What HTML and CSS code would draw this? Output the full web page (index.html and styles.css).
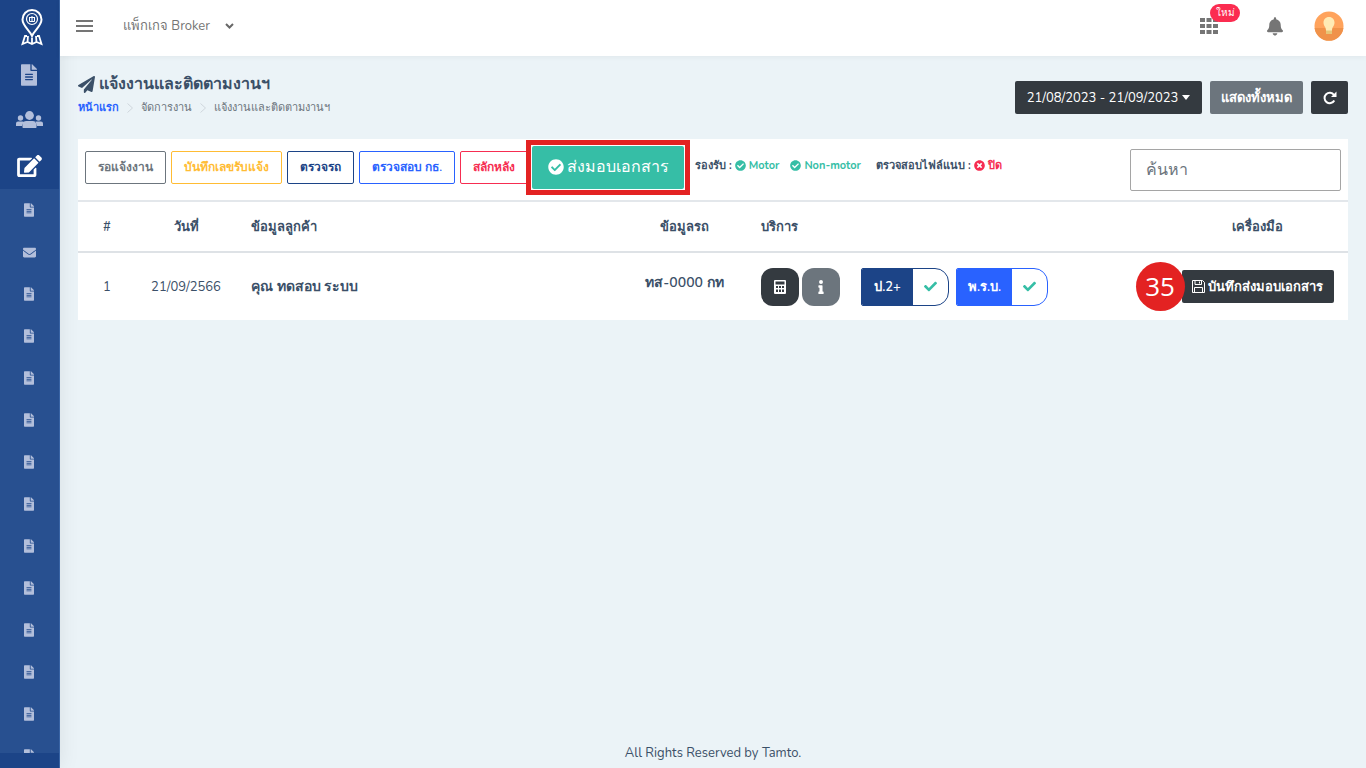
FILE: index.html
```html
<!DOCTYPE html>
<html lang="th">
<head>
<meta charset="utf-8">
<meta name="viewport" content="width=device-width, initial-scale=1">
<title>แจ้งงานและติดตามงานฯ</title>
<link rel="stylesheet" href="styles.css">
</head>
<body>
<svg class="defs" aria-hidden="true">
  <symbol id="file" viewBox="0 0 384 512"><path d="M224 136V0H24C10.700 0 0 10.700 0 24v464c0 13.300 10.700 24 24 24h336c13.300 0 24-10.700 24-24V160H248c-13.200 0-24-10.800-24-24zm64 236c0 6.600-5.400 12-12 12H108c-6.600 0-12-5.400-12-12v-8c0-6.600 5.400-12 12-12h168c6.600 0 12 5.400 12 12v8zm0-64c0 6.600-5.400 12-12 12H108c-6.600 0-12-5.400-12-12v-8c0-6.600 5.400-12 12-12h168c6.600 0 12 5.400 12 12v8zm0-72v8c0 6.600-5.400 12-12 12H108c-6.600 0-12-5.400-12-12v-8c0-6.600 5.400-12 12-12h168c6.600 0 12 5.400 12 12zm96-114.100v6.100H256V0h6.100c6.400 0 12.500 2.500 17 7l97.900 98c4.500 4.500 7 10.600 7 16.900z"/></symbol>
  <symbol id="check-circle" viewBox="0 0 512 512"><path d="M504 256c0 136.967-111.033 248-248 248S8 392.967 8 256 119.033 8 256 8s248 111.033 248 248zM227.314 387.314l184-184c6.248-6.248 6.248-16.379 0-22.627l-22.627-22.627c-6.248-6.249-16.379-6.249-22.628 0L216 308.118l-70.059-70.059c-6.248-6.248-16.379-6.248-22.628 0l-22.627 22.627c-6.248 6.248-6.248 16.379 0 22.627l104 104c6.249 6.249 16.379 6.249 22.628.001z"/></symbol>
  <symbol id="check" viewBox="0 0 512 512"><path d="M173.898 439.404l-166.4-166.4c-9.997-9.997-9.997-26.206 0-36.204l36.203-36.204c9.997-9.998 26.207-9.998 36.204 0L192 312.69 432.095 72.596c9.997-9.997 26.207-9.997 36.204 0l36.203 36.204c9.997 9.997 9.997 26.206 0 36.204l-294.4 294.401c-9.998 9.997-26.207 9.997-36.204-.001z"/></symbol>
</svg>
<div class="app">
  <nav class="sidebar" aria-label="เมนูหลัก">
    <a class="logo" href="#" aria-label="Tamto"><svg width="22" height="37" viewBox="0 0 22 37" fill="none" stroke="#fff"><path d="M11 27C9 21.500 1.500 17 1.500 10.500a9.500 9.500 0 0 1 19 0C20.500 17 13 21.500 11 27z" stroke-width="2"/><circle cx="11" cy="10" r="5.500" stroke-width="1.200"/><path d="M8 8.500h6M8.500 8.500v4h5v-4M11 7v6" stroke-width="1"/><path d="M6 27H4L1.500 35l5-2 4.500 2 4.500-2 5 2L18 27h-2M7 27l-.5 6M15 27l.5 6M11 29v5" stroke-width="1.800"/></svg></a>
    <a class="main-link" href="#" aria-label="เอกสาร"><svg width="16" height="22"><use href="#file"/></svg></a>
    <a class="main-link" href="#" aria-label="ลูกค้า"><svg width="27" height="17" viewBox="0 0 27 17"><circle cx="4.500" cy="7" r="2.700"/><circle cx="22.500" cy="7" r="2.700"/><circle cx="13.500" cy="4.500" r="4.400"/><path d="M0 15v-2.500Q0 10.500 2 10.500h4.500q1 0 1.500.5-2 1.500-2 4zM27 15v-2.500q0-2-2-2h-4.500q-1 0-1.500.5 2 1.500 2 4zM7 17q-.5 0-.5-1v-2q0-4 4-4h6q4 0 4 4v2q0 1-.5 1z"/></svg></a>
    <a class="main-link active" href="#" aria-label="จัดการงาน"><svg width="25" height="22" viewBox="0 0 576 512"><path d="M402.600 83.200l90.200 90.200c3.800 3.800 3.800 10 0 13.800L274.400 405.600l-92.800 10.300c-12.400 1.400-22.900-9.100-21.500-21.500l10.300-92.800L388.800 83.200c3.800-3.800 10-3.800 13.800 0zm162-22.900l-48.800-48.800c-15.200-15.200-39.900-15.200-55.200 0l-35.400 35.400c-3.800 3.800-3.800 10 0 13.800l90.200 90.200c3.800 3.800 10 3.800 13.800 0l35.400-35.400c15.200-15.300 15.200-40 0-55.200zM384 346.200V448H64V128h229.800c3.200 0 6.200-1.300 8.500-3.500l40-40c7.600-7.600 2.200-20.500-8.500-20.500H48C21.500 64 0 85.500 0 112v352c0 26.500 21.500 48 48 48h352c26.500 0 48-21.500 48-48V306.200c0-10.700-12.900-16-20.500-8.500l-40 40c-2.200 2.300-3.500 5.300-3.500 8.500z"/></svg></a>
    <div class="submenu">
      <a href="#" aria-label="รายการ 1"><svg width="10" height="14"><use href="#file"/></svg></a>
      <a href="#" aria-label="ข้อความ"><svg width="13" height="13" viewBox="0 0 512 512"><path d="M502.300 190.800c3.900-3.100 9.700-.2 9.700 4.700V400c0 26.500-21.500 48-48 48H48c-26.500 0-48-21.500-48-48V195.600c0-5 5.700-7.800 9.700-4.700 22.400 17.400 52.100 39.500 154.100 113.600 21.100 15.400 56.700 47.800 92.200 47.600 35.700.3 72-32.800 92.300-47.600 102-74.100 131.600-96.300 154-113.700zM256 320c23.200.4 56.600-29.200 73.400-41.400 132.700-96.300 142.800-104.700 173.400-128.700 5.800-4.500 9.200-11.500 9.200-18.900v-19c0-26.500-21.500-48-48-48H48c-26.500 0-48 21.500-48 48v19c0 7.400 3.400 14.300 9.200 18.900 30.600 23.900 40.700 32.400 173.400 128.700 16.800 12.200 50.200 41.800 73.400 41.400z"/></svg></a>
      <a href="#" aria-label="รายการ 2"><svg width="10" height="14"><use href="#file"/></svg></a>
      <a href="#" aria-label="รายการ 3"><svg width="10" height="14"><use href="#file"/></svg></a>
      <a href="#" aria-label="รายการ 4"><svg width="10" height="14"><use href="#file"/></svg></a>
      <a href="#" aria-label="รายการ 5"><svg width="10" height="14"><use href="#file"/></svg></a>
      <a href="#" aria-label="รายการ 6"><svg width="10" height="14"><use href="#file"/></svg></a>
      <a href="#" aria-label="รายการ 7"><svg width="10" height="14"><use href="#file"/></svg></a>
      <a href="#" aria-label="รายการ 8"><svg width="10" height="14"><use href="#file"/></svg></a>
      <a href="#" aria-label="รายการ 9"><svg width="10" height="14"><use href="#file"/></svg></a>
      <a href="#" aria-label="รายการ 10"><svg width="10" height="14"><use href="#file"/></svg></a>
      <a href="#" aria-label="รายการ 11"><svg width="10" height="14"><use href="#file"/></svg></a>
      <a href="#" aria-label="รายการ 12"><svg width="10" height="14"><use href="#file"/></svg></a>
      <a href="#" aria-label="รายการ 13"><svg width="10" height="14"><use href="#file"/></svg></a>
    </div>
  </nav>
  <div class="page">
    <header class="topbar">
      <button class="plain" aria-label="เมนู"><svg width="17" height="12" viewBox="0 0 17 12" fill="none" stroke="#757575" stroke-width="2"><path d="M0 1h17M0 6h17M0 11h17"/></svg></button>
      <button class="plain package">แพ็กเกจ Broker <svg width="9" height="6" viewBox="0 0 9 6" fill="none" stroke="#686868" stroke-width="2"><path d="M1 1l3.500 3.500L8 1"/></svg></button>
      <div class="top-actions">
        <button class="plain apps" aria-label="แอป"><svg width="18" height="16" viewBox="0 0 18 16" fill="#757575"><path d="M0 0h5v4H0zM6.500 0h5v4h-5zM13 0h5v4h-5zM0 6h5v4H0zM6.500 6h5v4h-5zM13 6h5v4h-5zM0 12h5v4H0zM6.500 12h5v4h-5zM13 12h5v4h-5z"/></svg><span class="badge">ใหม่</span></button>
        <button class="plain" aria-label="แจ้งเตือน"><svg width="16" height="19" viewBox="0 0 448 512" fill="#757575"><path d="M224 512c35.320 0 63.970-28.650 63.970-64H160.030c0 35.350 28.650 64 63.970 64zm215.390-149.710c-19.320-20.760-55.470-51.990-55.470-154.290 0-77.700-54.480-139.900-127.940-155.160V32c0-17.670-14.320-32-31.980-32s-31.980 14.330-31.980 32v20.840C118.560 68.100 64.080 130.300 64.080 208c0 102.300-36.150 133.530-55.470 154.290-6 6.450-8.660 14.160-8.610 21.710.11 16.400 12.980 32 32.100 32h383.800c19.120 0 32-15.600 32.100-32 .05-7.550-2.610-15.270-8.610-21.710z"/></svg></button>
        <button class="plain" aria-label="บัญชีผู้ใช้"><svg width="30" height="30" viewBox="0 0 30 30"><circle cx="15" cy="15" r="14.500" fill="#ffa35c"/><path d="M.6 17h28.800a14.500 14.500 0 0 1-28.800 0z" fill="#f0924a"/><path d="M12 18h6v5h-6z" fill="#e6c678"/><path d="M15 6c-3.500 0-5.500 2.500-5.500 5.500 0 3.500 2.500 4.500 2.500 8h6c0-3.500 2.500-4.500 2.500-8C20.500 8.500 18.500 6 15 6z" fill="#ffebb5"/></svg></button>
      </div>
    </header>
    <main>
      <div class="heading">
        <div>
          <h1><svg width="17" height="17" viewBox="0 0 512 512"><path d="M476 3.200L12.500 270.600c-18.100 10.400-15.800 35.600 2.200 43.200L121 358.400l287.300-253.200c5.500-4.900 13.300 2.600 8.600 8.300L176 407v80.500c0 23.600 28.500 32.900 42.500 15.800L282 426l124.600 52.200c14.200 6 30.400-2.900 33-18.200l72-432C515 7.800 493.300-6.800 476 3.200z"/></svg>แจ้งงานและติดตามงานฯ</h1>
          <nav class="crumbs" aria-label="เส้นทาง"><a href="#">หน้าแรก</a><svg width="6" height="10" viewBox="0 0 6 10"><path d="M.5.5L5.500 5 .5 9.500"/></svg><span>จัดการงาน</span><svg width="6" height="10" viewBox="0 0 6 10"><path d="M.5.5L5.500 5 .5 9.500"/></svg><span>แจ้งงานและติดตามงานฯ</span></nav>
        </div>
        <div class="filters">
          <button class="btn dark date">21/08/2023 - 21/09/2023 <svg width="8" height="5" viewBox="0 0 8 5"><path d="M0 0h8L4 5z"/></svg></button>
          <button class="btn grey all">แสดงทั้งหมด</button>
          <button class="btn dark refresh" aria-label="รีเฟรช"><svg width="14" height="14" viewBox="0 0 14 14"><path d="M11.300 9.500A5.200 5.200 0 1 1 11 4" fill="none" stroke="#fff" stroke-width="2"/><path d="M13.500.5V6H8z"/></svg></button>
        </div>
      </div>
      <section class="card">
        <div class="toolbar">
          <div class="tabs">
            <button class="tab t-grey">รอแจ้งงาน</button>
            <button class="tab t-yellow">บันทึกเลขรับแจ้ง</button>
            <button class="tab t-navy">ตรวจรถ</button>
            <button class="tab t-blue">ตรวจสอบ กธ.</button>
            <button class="tab t-red">สลักหลัง</button>
            <div class="highlight"><button class="current"><svg width="16" height="16"><use href="#check-circle"/></svg>ส่งมอบเอกสาร</button></div>
          </div>
          <div class="support">
            <span>รองรับ :</span><span class="yes motor"><svg width="11" height="11"><use href="#check-circle"/></svg>Motor</span><span class="yes nonmotor"><svg width="11" height="11"><use href="#check-circle"/></svg>Non-motor</span><span>ตรวจสอบไฟล์แนบ :</span><span class="no"><svg width="11" height="11" viewBox="0 0 512 512"><path d="M256 8C119 8 8 119 8 256s111 248 248 248 248-111 248-248S393 8 256 8zm121.600 313.100c4.700 4.700 4.700 12.300 0 17L338 377.600c-4.700 4.700-12.300 4.700-17 0L256 312l-65.100 65.600c-4.700 4.700-12.300 4.700-17 0L134.400 338c-4.700-4.700-4.700-12.300 0-17l65.600-65-65.600-65.100c-4.700-4.700-4.700-12.300 0-17l39.600-39.600c4.700-4.700 12.300-4.700 17 0l65 65.700 65.100-65.600c4.700-4.700 12.300-4.700 17 0l39.600 39.600c4.700 4.700 4.700 12.300 0 17L312 256l65.600 65.100z"/></svg>ปิด</span>
          </div>
          <input class="search" type="search" placeholder="ค้นหา" aria-label="ค้นหา">
        </div>
        <table>
          <colgroup><col class="c-no"><col class="c-date"><col><col class="c-car"><col class="c-service"><col class="c-tools"></colgroup>
          <thead><tr><th>#</th><th>วันที่</th><th class="left">ข้อมูลลูกค้า</th><th>ข้อมูลรถ</th><th class="left">บริการ</th><th>เครื่องมือ</th></tr></thead>
          <tbody><tr>
            <td>1</td><td>21/09/2566</td><td class="left name">คุณ ทดสอบ ระบบ</td><td class="plate">ทส-0000 กท</td>
            <td class="left"><div class="services">
              <button class="square dark" aria-label="คำนวณ"><svg width="12" height="14" viewBox="0 0 12 14"><path fill-rule="evenodd" d="M1 0h10q1 0 1 1v12q0 1-1 1H1q-1 0-1-1V1q0-1 1-1zm.5 1.500v3h9v-3zM2 6v2h2V6zm3 0v2h2V6zm3 0v2h2V6zM2 9.500v2.500h2V9.500zm3 0v2.500h2V9.500zm3 0v2.500h2V9.500z"/></svg></button>
              <button class="square grey" aria-label="ข้อมูล"><svg width="6" height="14" viewBox="0 0 192 512"><path d="M20 424h20V280H20c-11 0-20-9-20-20v-48c0-11 9-20 20-20h112c11 0 20 9 20 20v212h20c11 0 20 9 20 20v48c0 11-9 20-20 20H20c-11 0-20-9-20-20v-48c0-11 9-20 20-20zM96 0a72 72 0 1 0 0 144A72 72 0 0 0 96 0z"/></svg></button>
              <button class="policy p-navy"><span>ป.2+</span><i><svg width="13" height="13"><use href="#check"/></svg></i></button>
              <button class="policy p-blue"><span>พ.ร.บ.</span><i><svg width="13" height="13"><use href="#check"/></svg></i></button>
            </div></td>
            <td><div class="save-wrap"><button class="btn dark save"><svg width="13" height="13" viewBox="0 0 13 13" fill="none" stroke="#fff"><path d="M.5.5h10l2 2v10H.5zM3 .5v4h6.500v-4M7.500 1.500v2M2.500 12.500v-5h8v5"/></svg>บันทึกส่งมอบเอกสาร</button><span class="step">35</span></div></td>
          </tr></tbody>
        </table>
      </section>
    </main>
    <footer>All Rights Reserved by Tamto.</footer>
  </div>
</div>
</body>
</html>
```
FILE: styles.css
```css
* { box-sizing: border-box; }
body {
  margin: 0;
  font-family: "Nunito", "Noto Sans", sans-serif;
  font-size: 14px;
  line-height: 20px;
  color: #3b5068;
  background: #ebf3f7;
}
button, input { font: inherit; color: inherit; }
button { cursor: pointer; }
a { text-decoration: none; }
svg { display: block; flex: none; fill: currentColor; }
svg[fill="none"] { fill: none; }
.defs { position: absolute; width: 0; height: 0; }

.app { display: flex; height: 100vh; min-height: 480px; }
.sidebar {
  width: 60px;
  flex: none;
  display: flex;
  flex-direction: column;
  padding-bottom: 15px;
  background: #1c4487;
  color: #b3bfdb;
  border-right: 1px solid #3964a5;
  box-shadow: 1px 0 20px rgba(0, 0, 0, .08);
}
.sidebar a { display: flex; align-items: center; justify-content: center; padding-right: 1px; color: inherit; flex: none; }
.sidebar .logo { height: 52px; padding: 2px 0 0 4px; }
.main-link { height: 45px; }
.sidebar .active { color: #fff; height: 47px; }
.submenu { flex: 1; overflow: hidden; background: #285090; }
.submenu a { height: 42px; }

.page { flex: 1; min-width: 0; display: flex; flex-direction: column; }
.topbar {
  display: flex;
  align-items: center;
  height: 56px;
  padding: 0 22px 4px 16px;
  background: #fff;
  box-shadow: 0 1px 6px rgba(0, 0, 0, .05);
}
.plain { border: 0; background: none; padding: 0; color: #757575; display: flex; align-items: center; }
.package { margin-left: 30px; gap: 15px; font-size: 13px; }
.top-actions { margin-left: auto; display: flex; align-items: center; gap: 31px; }
.apps { position: relative; margin-right: 18px; }
.badge {
  position: absolute;
  left: 10px;
  top: -14px;
  width: 30px;
  height: 18px;
  border-radius: 9px;
  background: #fb2c50;
  color: #fff;
  font-size: 10px;
  line-height: 18px;
}

main { flex: 1; padding: 17px 18px 0; }
.heading { display: flex; justify-content: space-between; align-items: flex-start; height: 66px; }
h1 { display: flex; align-items: center; gap: 4px; margin: 0 0 3px; font-size: 16px; line-height: 22px; }
.crumbs { display: flex; align-items: center; gap: 8px; font-size: 11px; color: #6c757d; font-weight: 500; }
.crumbs a { color: #2962ff; font-weight: 600; }
.crumbs svg { fill: none; stroke: #cfd6dc; }
.filters { display: flex; gap: 8px; padding-top: 8px; }
.btn {
  display: flex;
  align-items: center;
  justify-content: center;
  height: 33px;
  border: 0;
  border-radius: 2px;
  color: #fff;
  font-size: 13px;
  white-space: nowrap;
}
.dark { background: #343a40; }
.grey { background: #6c757d; }
.date { width: 187px; gap: 4px; }
.all { width: 93px; font-weight: 600; }
.refresh { width: 37px; }

.card { background: #fff; }
.toolbar { display: flex; align-items: center; height: 61px; padding: 0 7px; }
.tabs { display: flex; align-items: center; gap: 5px; margin-bottom: 5px; }
.tab {
  height: 33px;
  padding: 0 12px;
  border: 1px solid;
  border-radius: 2px;
  background: #fff;
  font-size: 12px;
  font-weight: 600;
  white-space: nowrap;
}
.t-grey { color: #6c757d; }
.t-yellow { color: #ffbc34; }
.t-navy { color: #1c4487; }
.t-blue { color: #2962ff; }
.t-red { color: #f62d51; }
.highlight { border: 5px solid #e32222; padding: 1px; background: #fff; margin-left: -7px; z-index: 1; }
.current {
  display: flex;
  align-items: center;
  justify-content: center;
  gap: 3px;
  width: 152px;
  height: 43px;
  border: 0;
  border-radius: 2px;
  background: #36bea6;
  color: #fff;
  font-size: 16px;
  font-weight: 500;
  white-space: nowrap;
}
.support { display: flex; align-items: center; gap: 3px; margin: 0 auto 8px 5px; font-size: 11px; font-weight: 700; white-space: nowrap; }
.support span { display: flex; align-items: center; gap: 3px; }
.support .yes { color: #36bea6; }
.support .no { color: #f62d51; }
.motor { margin-right: 8px; }
.nonmotor { margin-right: 12px; }
.search {
  width: 211px;
  height: 42px;
  padding: 0 15px;
  border: 1px solid #a5a5a5;
  border-radius: 2px;
  background: #fff;
  font-size: 16px;
}
.search::placeholder { color: #6c757d; opacity: 1; }

table { width: 100%; border-collapse: collapse; table-layout: fixed; }
.c-no { width: 58px; }
.c-date { width: 100px; }
.c-car { width: 129px; }
.c-service { width: 418px; }
.c-tools { width: 181px; }
th { height: 51px; padding: 0; border-top: 2px solid #e3e7eb; border-bottom: 2px solid #dee2e6; font-size: 13px; font-weight: 600; }
td { height: 68px; padding: 0; text-align: center; font-size: 13px; }
.left { text-align: left; padding-left: 15px; }
.name { font-size: 14px; font-weight: 600; }
.plate { font-size: 14px; font-weight: 600; padding-bottom: 8px; }
td.left:not(.name), th.left:nth-child(5) { padding-left: 12px; }
.services { display: flex; align-items: center; }
.square {
  width: 38px;
  height: 38px;
  margin-right: 3px;
  border: 0;
  border-radius: 12px;
  color: #fff;
  display: flex;
  align-items: center;
  justify-content: center;
}
.policy { display: flex; height: 38px; padding: 0; margin-right: 7px; border: 1px solid; border-radius: 2px 14px 14px 2px; background: #fff; overflow: hidden; font-weight: 600; font-size: 13px; }
.policy span { display: flex; align-items: center; justify-content: center; color: #fff; }
.policy i { width: 35px; align-self: center; color: #36bea6; display: flex; justify-content: center; }
.p-navy { margin-left: 18px; border-color: #1c4487; }
.p-navy span { width: 51px; background: #1c4487; }
.p-blue { border-color: #2962ff; }
.p-blue span { width: 55px; background: #2962ff; }
.save-wrap { position: relative; width: 152px; margin: 0 auto; }
.save { width: 100%; gap: 3px; font-weight: 600; }
.step {
  position: absolute;
  left: -46px;
  top: -8px;
  width: 49px;
  height: 49px;
  border-radius: 50%;
  background: #e32222;
  color: #fff;
  font-family: "Open Sans", "Noto Sans", sans-serif;
  font-size: 26px;
  line-height: 48px;
  text-align: center;
}
footer { padding: 0 0 5px; text-align: center; font-size: 13px; }
```
